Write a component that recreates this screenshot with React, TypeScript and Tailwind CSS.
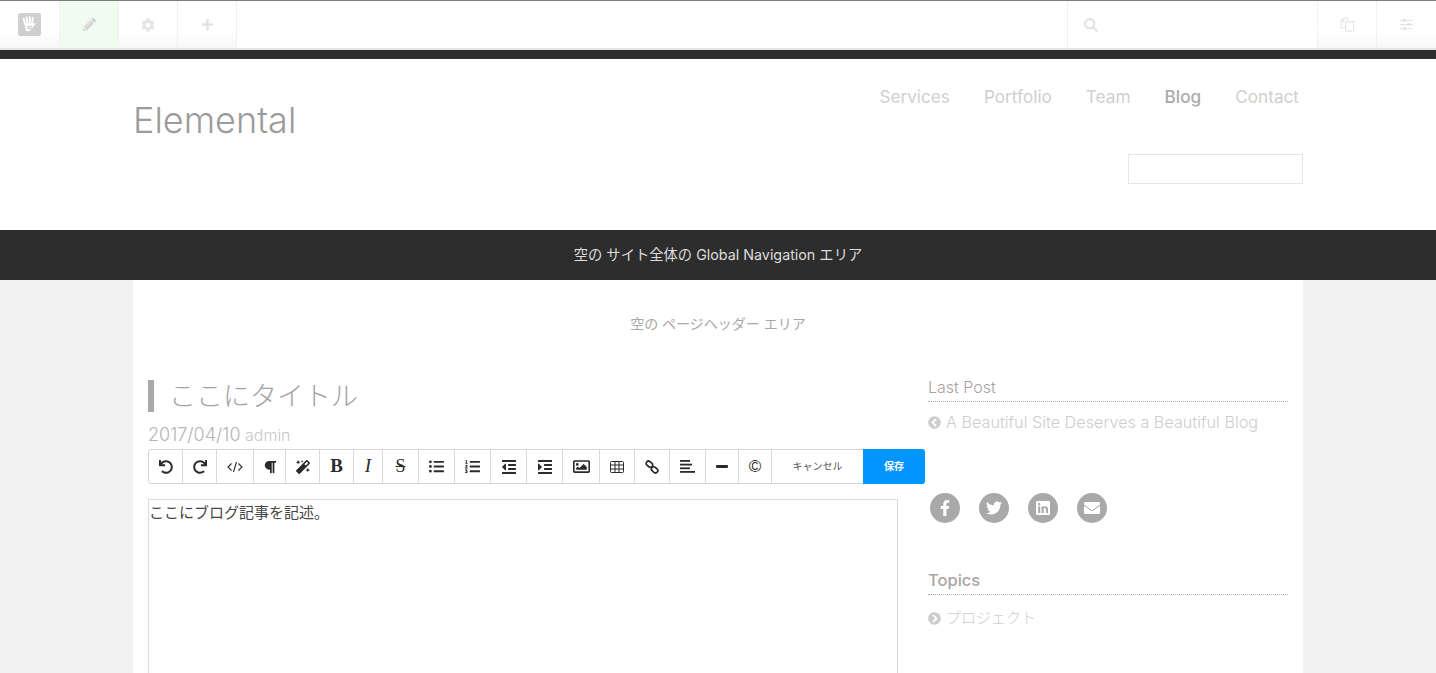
import {
  FaUndo, FaRedo, FaParagraph, FaMagic, FaListUl, FaListOl, FaOutdent, FaIndent,
  FaRegImage, FaPencilAlt, FaCog, FaPlus,
  FaSearch, FaFacebookF, FaTwitter, FaLinkedin, FaEnvelope, FaChevronCircleLeft, FaChevronCircleRight,
} from "react-icons/fa";
import type { ReactNode } from "react";

const font = "font-['Inter','Noto_Sans_CJK_JP',sans-serif]";

function Logo() {
  return (
    <svg viewBox="0 0 24 24" className="w-[23px] h-[23px]">
      <rect width="24" height="24" rx="3" fill="#cfcfcf" />
      <path d="M6 6l1.6 6M9 4.5l.9 7M12.3 4.2l-.1 7M15.5 5.2l-1 6.5" stroke="#fff" strokeWidth="1.9" strokeLinecap="round" fill="none" />
      <path d="M7.5 11.5c2-1 6-1.5 7.500-.5 1 .7 2-1 3.500-1.200-.5 2-2 3.500-3 5-1.500 3-3.500 4.700-6 4.200-2.200-.5-2.500-5-2-7.500z" fill="#fff" />
      <path d="M14 14.300c-1.500-.8-3.500-.3-3.800 1-.2 1.200 1.500 1.700 3.800.7" stroke="#cfcfcf" strokeWidth="1.500" fill="none" strokeLinecap="round" />
    </svg>
  );
}

function PagesIcon() {
  return (
    <svg viewBox="0 0 16 16" className="w-[15px] h-[15px]" fill="none" stroke="#e2e2e2" strokeWidth="1.100">
      <path d="M5.500 11.500H1V4.500L4 1h4v4" />
      <rect x="6" y="5" width="8.500" height="10" />
      <path d="M1 4.500h3V1" />
    </svg>
  );
}

function SlidersIcon() {
  return (
    <svg viewBox="0 0 14 14" className="w-[13px] h-[13px]" fill="#e0e0e0">
      <rect x="0" y="2" width="14" height="1" />
      <rect x="3.500" y="1" width="2.500" height="3" />
      <rect x="0" y="6.500" width="14" height="1" />
      <rect x="8" y="5.500" width="2.500" height="3" />
      <rect x="0" y="11" width="14" height="1" />
      <rect x="4" y="10" width="2.500" height="3" />
    </svg>
  );
}

function CodeIcon() {
  return (
    <svg viewBox="0 0 16 12" className="w-[16px] h-[12px]" fill="none" stroke="#2b2b2b" strokeWidth="1.100">
      <path d="M4.500 2.500L1 6l3.500 3.500M11.500 2.500L15 6l-3.500 3.500M9.500 1L6.500 11" />
    </svg>
  );
}

function TableIcon() {
  return (
    <svg viewBox="0 0 14 12" className="w-[14px] h-[12px]" fill="none" stroke="#2b2b2b" strokeWidth="1">
      <rect x="0.500" y="0.500" width="13" height="11" rx="1" />
      <path d="M0.500 4h13M0.500 8h13M5 0.500v11M9 0.500v11" />
    </svg>
  );
}

function LinkIcon() {
  return (
    <svg viewBox="0 0 14 14" className="w-[14px] h-[14px]" fill="none" stroke="#2b2b2b" strokeWidth="1.700">
      <rect x="0.900" y="1.900" width="7" height="4.600" rx="2.300" transform="rotate(40 4.400 4.200)" />
      <rect x="6.100" y="7.500" width="7" height="4.600" rx="2.300" transform="rotate(40 9.600 9.800)" />
    </svg>
  );
}

function AlignIcon() {
  return (
    <svg viewBox="0 0 15 13" className="w-[15px] h-[13px]" fill="#2b2b2b">
      <rect x="0" y="0" width="10" height="1.800" />
      <rect x="0" y="3.700" width="12" height="1.800" />
      <rect x="0" y="7.400" width="10" height="1.800" />
      <rect x="0" y="11" width="15" height="1.800" />
    </svg>
  );
}

function TopCell({ children, className }: { children: ReactNode; className: string }) {
  return <div className={`h-full flex items-center justify-center border-r border-[#f1f1f1] ${className}`}>{children}</div>;
}

function ToolBtn({ children, className }: { children: ReactNode; className: string }) {
  return <div className={`h-full flex items-center justify-center border-r border-[#d9d9d9] text-[#2b2b2b] shrink-0 ${className}`}>{children}</div>;
}

function Social({ children }: { children: ReactNode }) {
  return <div className="w-[30px] h-[30px] rounded-full bg-[#a9a9a9] flex items-center justify-center text-white text-[16px]">{children}</div>;
}

export default function App() {
  return (
    <div className={`w-[1436px] h-[673px] overflow-hidden bg-[#f2f2f2] ${font}`}>
      {/* concrete5 toolbar */}
      <div className="h-[50px] flex border-t border-[#7c7c7c] border-b-2 border-b-[#e4e4e4] bg-gradient-to-b from-white from-60% to-[#f8f8f8]">
        <TopCell className="w-[60px]"><Logo /></TopCell>
        <TopCell className="w-[59px] bg-[#f1fcf0] text-[#d2d2d2] text-[13px]"><FaPencilAlt /></TopCell>
        <TopCell className="w-[59px] text-[#e6e6e6] text-[14px]"><FaCog /></TopCell>
        <TopCell className="w-[59px] text-[#e2e2e2] text-[13px]"><FaPlus /></TopCell>
        <div className="flex-1 h-full bg-white" />
        <div className="w-[250px] h-full pl-[16px] flex items-center border-l border-[#f1f1f1] bg-white text-[#e4e4e4] text-[14px]"><FaSearch /></div>
        <div className="w-[59px] h-full flex items-center justify-center border-l border-[#f1f1f1]"><PagesIcon /></div>
        <div className="w-[60px] h-full flex items-center justify-center border-l border-[#f1f1f1]"><SlidersIcon /></div>
      </div>
      <div className="h-[9px] bg-[#2d2d2d]" />

      {/* site header */}
      <div className="h-[171px] bg-white">
        <div className="w-[1170px] mx-auto flex justify-between">
          <div className="pt-[39px] text-[36px] leading-[44px] font-light text-[#9b9b9b]">Elemental</div>
          <div className="flex flex-col items-end">
            <div className="flex gap-[34px] pt-[26px] pr-[4px] text-[17.200px] leading-[24px] text-[#cfcfcf]">
              <span>Services</span>
              <span>Portfolio</span>
              <span>Team</span>
              <span className="text-[#ababab] font-medium">Blog</span>
              <span>Contact</span>
            </div>
            <div className="mt-[45px] w-[175px] h-[30px] border border-[#e6e6e6] bg-white" />
          </div>
        </div>
      </div>

      <div className="h-[50px] pb-[1px] bg-[#2d2d2d] flex items-center justify-center text-[14.300px] text-[#dcdcdc]">
        空の サイト全体の Global Navigation エリア
      </div>

      {/* page body */}
      <div className="w-[1170px] mx-auto bg-white h-[393px]">
        <div className="h-[90px] pt-[34px] text-center text-[14px] leading-[20px] text-[#a8a8a8]">空の ページヘッダー エリア</div>
        <div className="flex pl-[15px]">
          <div className="w-[750px] shrink-0">
            <div className="h-[32px] mt-[10px] pl-[15px] border-l-[6px] border-[#a9a9a9] text-[27px] leading-[33px] font-light text-[#a3a3a3]">ここにタイトル</div>
            <div className="mt-[13px] text-[16px] leading-[20px] font-light text-[#b4b4b4]">
              <span className="text-[18px]">2017/04/10</span> <span className="text-[#c8c8c8]">admin</span>
            </div>
            {/* editor toolbar */}
            <div className="mt-[4px] w-[777px] h-[35px] flex border border-[#d4d4d4] rounded-[3px] bg-white">
              <ToolBtn className="w-[34px] text-[14px]"><FaUndo /></ToolBtn>
              <ToolBtn className="w-[34px] text-[14px]"><FaRedo /></ToolBtn>
              <ToolBtn className="w-[37px]"><CodeIcon /></ToolBtn>
              <ToolBtn className="w-[32px] text-[14px]"><FaParagraph /></ToolBtn>
              <ToolBtn className="w-[34px] text-[14px]"><FaMagic /></ToolBtn>
              <ToolBtn className="w-[34px] text-[19px] font-bold font-['Liberation_Serif',serif]">B</ToolBtn>
              <ToolBtn className="w-[29px] text-[19px] italic font-['Liberation_Serif',serif]">I</ToolBtn>
              <ToolBtn className="w-[36px] text-[18px] line-through font-['Liberation_Serif',serif]">S</ToolBtn>
              <ToolBtn className="w-[36px] text-[15px]"><FaListUl /></ToolBtn>
              <ToolBtn className="w-[36px] text-[15px]"><FaListOl /></ToolBtn>
              <ToolBtn className="w-[36px] text-[16px]"><FaOutdent /></ToolBtn>
              <ToolBtn className="w-[36px] text-[16px]"><FaIndent /></ToolBtn>
              <ToolBtn className="w-[37px] text-[17px]"><FaRegImage /></ToolBtn>
              <ToolBtn className="w-[35px]"><TableIcon /></ToolBtn>
              <ToolBtn className="w-[35px]"><LinkIcon /></ToolBtn>
              <ToolBtn className="w-[36px]"><AlignIcon /></ToolBtn>
              <ToolBtn className="w-[33px]"><span className="w-[12px] h-[3px] rounded-[1px] bg-[#2b2b2b]" /></ToolBtn>
              <ToolBtn className="w-[33px] text-[17px] font-['Liberation_Sans',sans-serif]">©</ToolBtn>
              <div className="w-[91px] h-full flex items-center justify-center text-[10px] text-[#555]">キャンセル</div>
              <div className="flex-1 -my-px -mr-px flex items-center justify-center bg-[#0095ff] rounded-r-[3px] text-[10px] font-bold text-white">保存</div>
            </div>
            <div className="mt-[15px] h-[300px] border border-[#dcdcdc] text-[15px] leading-[25px] text-[#444]">ここにブログ記事を記述。</div>
          </div>

          {/* sidebar */}
          <div className="ml-[30px] w-[360px]">
            <div className="h-[26px] mt-[6px] pb-[2px] border-b border-dotted border-[#aaa] text-[16px] leading-[22px] font-light text-[#a8a2a2]">Last Post</div>
            <div className="mt-[8px] flex items-center gap-[5px] text-[16.200px] leading-[24px] font-light text-[#cdcdcd]">
              <FaChevronCircleLeft className="text-[13px]" />
              <span>A Beautiful Site Deserves a Beautiful Blog</span>
            </div>
            <div className="mt-[59px] pl-[2px] flex gap-[19px]">
              <Social><FaFacebookF /></Social>
              <Social><FaTwitter /></Social>
              <Social><FaLinkedin /></Social>
              <Social><FaEnvelope /></Social>
            </div>
            <div className="h-[26px] mt-[46px] pb-[2px] border-b border-dotted border-[#aaa] text-[16.500px] leading-[22px] font-medium text-[#aaa4a4]">Topics</div>
            <div className="mt-[11px] flex items-center gap-[5px] text-[15px] leading-[24px] font-light text-[#cdcdcd]">
              <FaChevronCircleRight className="text-[13px]" />
              <span>プロジェクト</span>
            </div>
          </div>
        </div>
      </div>
    </div>
  );
}
